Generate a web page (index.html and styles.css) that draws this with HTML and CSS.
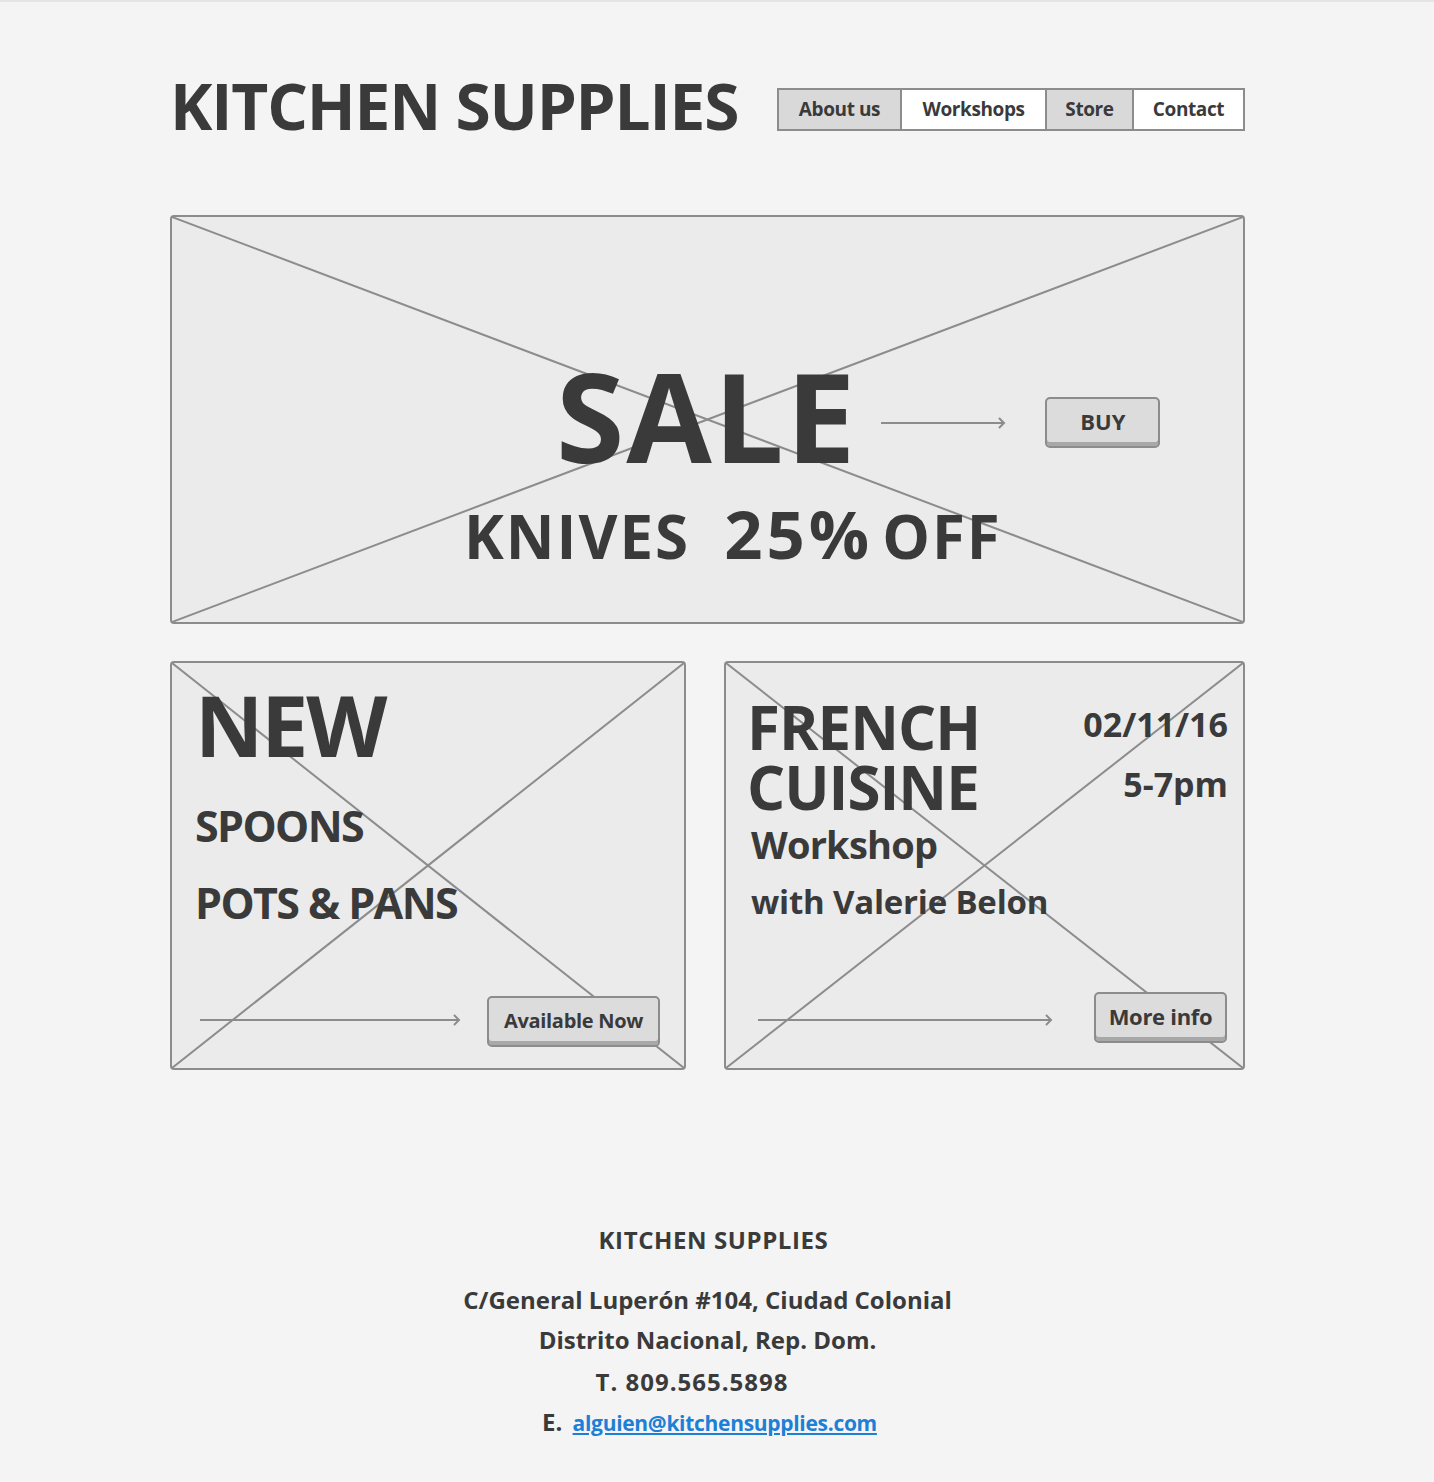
FILE: index.html
```html
<!DOCTYPE html>
<html lang="en">
<head>
<meta charset="utf-8">
<title>Kitchen Supplies</title>
<link rel="stylesheet" href="styles.css">
</head>
<body>
<div class="page">
  <header class="header">
    <h1 class="logo">KITCHEN SUPPLIES</h1>
    <nav class="nav">
      <a class="nav-item gray" href="#">About us</a>
      <a class="nav-item white" href="#">Workshops</a>
      <a class="nav-item gray" href="#">Store</a>
      <a class="nav-item white" href="#">Contact</a>
    </nav>
  </header>

  <section class="box hero">
    <svg class="xlines" viewBox="0 0 100 100" preserveAspectRatio="none" aria-hidden="true">
      <line x1="0" y1="0" x2="100" y2="100" vector-effect="non-scaling-stroke"/>
      <line x1="100" y1="0" x2="0" y2="100" vector-effect="non-scaling-stroke"/>
    </svg>
    <div class="hero-row">
      <span class="sale">SALE</span>
      <svg class="arrow arrow-hero" viewBox="0 0 126 12" aria-hidden="true">
        <line x1="0" y1="6" x2="123" y2="6"/>
        <polyline points="118,1 123,6 118,11"/>
      </svg>
      <button class="btn btn-buy">BUY</button>
    </div>
    <div class="knives"><span>KNIVES</span><span class="pct">25%</span><span class="off">OFF</span></div>
  </section>

  <div class="cards">
    <section class="box card card-new">
      <svg class="xlines" viewBox="0 0 100 100" preserveAspectRatio="none" aria-hidden="true">
        <line x1="0" y1="0" x2="100" y2="100" vector-effect="non-scaling-stroke"/>
        <line x1="100" y1="0" x2="0" y2="100" vector-effect="non-scaling-stroke"/>
      </svg>
      <div class="card-body">
        <div class="new">NEW</div>
        <div class="item">SPOONS</div>
        <div class="item item-2">POTS &amp; PANS</div>
      </div>
      <div class="card-foot">
        <svg class="arrow arrow-new" viewBox="0 0 262 12" aria-hidden="true">
          <line x1="0" y1="6" x2="259" y2="6"/>
          <polyline points="254,1 259,6 254,11"/>
        </svg>
        <button class="btn btn-avail">Available Now</button>
      </div>
    </section>

    <section class="box card card-french">
      <svg class="xlines" viewBox="0 0 100 100" preserveAspectRatio="none" aria-hidden="true">
        <line x1="0" y1="0" x2="100" y2="100" vector-effect="non-scaling-stroke"/>
        <line x1="100" y1="0" x2="0" y2="100" vector-effect="non-scaling-stroke"/>
      </svg>
      <div class="card-body french-body">
        <div class="french-top">
          <div class="french-title"><div>FRENCH</div><div>CUISINE</div></div>
          <div class="french-date">
            <div class="date">02/11/16</div>
            <div class="time">5-7pm</div>
          </div>
        </div>
        <div class="workshop">Workshop</div>
        <div class="with">with Valerie Belon</div>
      </div>
      <div class="card-foot foot-french">
        <svg class="arrow arrow-french" viewBox="0 0 296 12" aria-hidden="true">
          <line x1="0" y1="6" x2="293" y2="6"/>
          <polyline points="288,1 293,6 288,11"/>
        </svg>
        <button class="btn btn-more">More info</button>
      </div>
    </section>
  </div>

  <footer class="footer">
    <div class="f-title">KITCHEN SUPPLIES</div>
    <div class="f-line f-addr">C/General Luperón #104, Ciudad Colonial</div>
    <div class="f-line">Distrito Nacional, Rep. Dom.</div>
    <div class="f-line f-tel">T. 809.565.5898</div>
    <div class="f-line f-mail"><span class="f-e">E.</span> <a href="#">alguien@kitchensupplies.com</a></div>
  </footer>
</div>
</body>
</html>
```

FILE: styles.css
```css
html, body {
  margin: 0;
  padding: 0;
}
body {
  background: #f4f4f4;
  border-top: 2px solid #e4e4e4;
  font-family: "Open Sans", "Liberation Sans", sans-serif;
  color: #3a3a3a;
  min-height: 1480px;
}
.page {
  width: 1075px;
  margin-left: 170px;
}

/* header */
.header {
  display: flex;
  align-items: center;
  justify-content: space-between;
  height: 86px;
  margin-top: 64px;
}
.logo {
  margin: 0 0 6px;
  font-size: 64px;
  font-weight: 700;
  letter-spacing: -1.2px;
  line-height: 1;
  color: #3a3a3a;
}
.nav {
  display: flex;
  border: 2px solid #8c8c8c;
  height: 39px;
  margin-top: 0;
}
.nav-item {
  display: flex;
  align-items: center;
  justify-content: center;
  font-size: 19px;
  font-weight: 700;
  letter-spacing: -0.4px;
  color: #3a3a3a;
  text-decoration: none;
  border-left: 2px solid #8c8c8c;
}
.nav-item:first-child { border-left: 0; width: 121px; }
.nav-item:nth-child(2) { width: 143px; }
.nav-item:nth-child(3) { width: 85px; }
.nav-item:nth-child(4) { width: 109px; }
.nav-item.gray { background: #d9d9d9; }
.nav-item.white { background: #ffffff; }

/* boxes */
.box {
  position: relative;
  background: #ebebeb;
  border: 2px solid #8c8c8c;
  border-radius: 4px;
  box-sizing: border-box;
}
.xlines {
  position: absolute;
  inset: 0;
  width: 100%;
  height: 100%;
}
.xlines line {
  stroke: #8c8c8c;
  stroke-width: 2;
}
.arrow line, .arrow polyline {
  stroke: #8c8c8c;
  stroke-width: 2;
  fill: none;
}

.btn {
  position: relative;
  font-family: "Open Sans", "Liberation Sans", sans-serif;
  font-weight: 700;
  color: #3a3a3a;
  background: #dcdcdc;
  border: 2px solid #8c8c8c;
  border-radius: 5px;
  box-shadow: inset 0 -4px 0 #a8a8a8;
  padding: 0 0 3px;
  box-sizing: border-box;
}

/* hero */
.hero {
  margin-top: 63px;
  height: 409px;
  display: flex;
  flex-direction: column;
}
.hero-row {
  position: relative;
  display: flex;
  align-items: center;
  margin-top: 138px;
  margin-left: 384px;
  height: 120px;
}
.sale {
  font-size: 124px;
  font-weight: 700;
  letter-spacing: 2px;
  line-height: 1;
}
.arrow-hero {
  width: 126px;
  height: 12px;
  margin-left: 24px;
  margin-top: 16px;
}
.btn-buy {
  width: 115px;
  height: 51px;
  margin-left: 38px;
  margin-top: 14px;
  font-size: 22px;
}
.knives {
  position: relative;
  display: flex;
  align-items: baseline;
  margin-left: 292px;
  margin-top: 25px;
  font-size: 60px;
  font-weight: 700;
  line-height: 1;
  letter-spacing: 2px;
}
.knives .pct { margin-left: 34px; font-size: 67px; letter-spacing: 4px; }
.knives .off { margin-left: 9px; }

/* cards */
.cards {
  display: flex;
  gap: 38px;
  margin-top: 37px;
}
.card {
  height: 409px;
  display: flex;
  flex-direction: column;
  justify-content: space-between;
}
.card-new { width: 516px; }
.card-french { width: 521px; }
.card-body {
  position: relative;
  padding: 20px 0 0 23px;
}
.new {
  font-size: 84px;
  font-weight: 700;
  letter-spacing: -2px;
  line-height: 1;
}
.item {
  font-size: 43px;
  font-weight: 700;
  line-height: 1;
  margin-top: 37px;
  letter-spacing: -1.6px;
}
.item-2 { margin-top: 34px; }
.card-foot {
  position: relative;
  display: flex;
  align-items: center;
  padding: 0 24px 21px 28px;
  justify-content: space-between;
}
.arrow-new {
  width: 262px;
  height: 12px;
  margin-top: -4px;
}
.btn-avail {
  width: 173px;
  height: 51px;
  font-size: 20px;
  letter-spacing: -0.3px;
}

.french-body {
  padding: 34px 15px 0 21px;
}
.french-top {
  display: flex;
  justify-content: space-between;
}
.french-title {
  font-size: 60px;
  font-weight: 700;
  line-height: 60px;
  letter-spacing: -1px;
}
.french-date {
  text-align: right;
  font-weight: 700;
  font-size: 34px;
  line-height: 1;
  padding-top: 10px;
}
.time { margin-top: 26px; }
.workshop {
  font-size: 38px;
  font-weight: 700;
  line-height: 1;
  margin-top: 8px;
  margin-left: 4px;
  letter-spacing: -0.8px;
}
.with {
  font-size: 33px;
  font-weight: 700;
  line-height: 1;
  margin-top: 22px;
  margin-left: 4px;
  letter-spacing: -0.2px;
}
.foot-french {
  padding: 0 16px 25px 32px;
}
.arrow-french {
  width: 296px;
  height: 12px;
  margin-top: 4px;
}
.btn-more {
  width: 133px;
  height: 51px;
  font-size: 22px;
  letter-spacing: -0.3px;
}

/* footer */
.footer {
  margin-top: 154px;
  text-align: center;
  font-weight: 700;
  color: #3a3a3a;
}
.f-title {
  font-size: 24px;
  line-height: 32px;
  letter-spacing: 0.6px;
  padding-left: 12px;
}
.f-line {
  font-size: 24px;
  line-height: 40px;
  letter-spacing: 0;
}
.f-addr { margin-top: 24px; }
.f-tel { margin-right: 31px; line-height: 44px; letter-spacing: 1px; }
.f-mail { padding-left: 4px; line-height: 36px; }
.f-e { margin-right: 4px; }
.f-mail a {
  color: #1e7fd6;
  text-decoration: underline;
  font-size: 21px;
  letter-spacing: -0.3px;
}
```
